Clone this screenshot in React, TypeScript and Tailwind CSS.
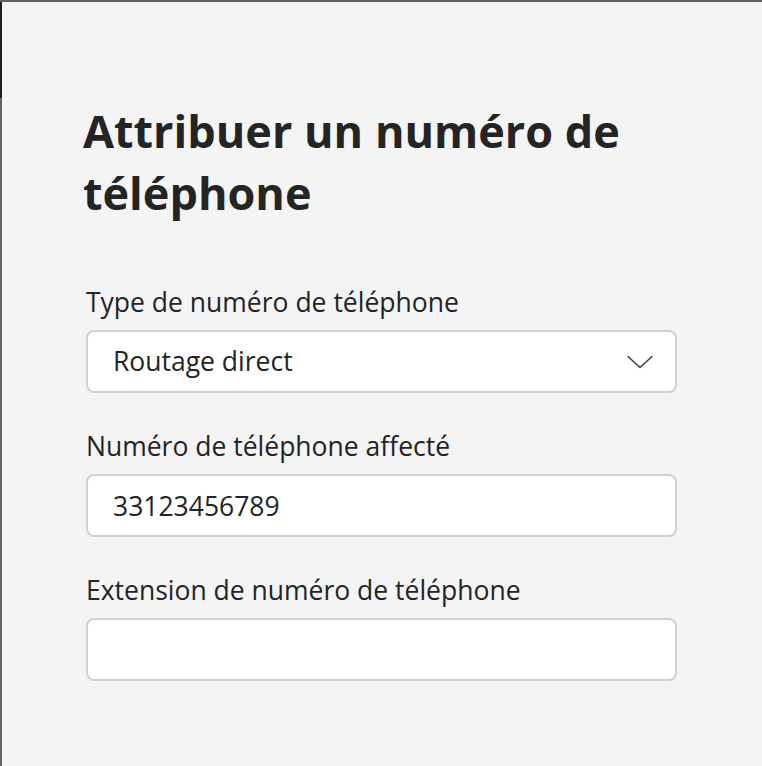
import { useState } from 'react';

const font = { fontFamily: '"Open Sans", "Noto Sans", sans-serif' };

function Field({
  label,
  children,
}: {
  label: string;
  children: React.ReactNode;
}) {
  return (
    <div className="flex flex-col">
      <label className="h-[36px] leading-[36px] text-[26.5px] text-[#242424]">{label}</label>
      <div className="mt-[10px]">{children}</div>
    </div>
  );
}

function ChevronDown() {
  return (
    <svg width="26" height="14" viewBox="0 0 26 14" fill="none">
      <path d="M1 1.5L13 12.5L25 1.5" stroke="#424242" strokeWidth="1.6" strokeLinecap="round" strokeLinejoin="round" />
    </svg>
  );
}

export default function App() {
  const [type] = useState('Routage direct');
  const [number, setNumber] = useState('33123456789');
  const [ext, setExt] = useState('');

  return (
    <div className="w-[762px] h-[766px] bg-[#f4f4f4] flex flex-col overflow-hidden" style={font}>
      <div className="h-[2px] bg-[#606060]" />
      <div className="flex flex-1">
        <div className="w-[2px] flex flex-col">
          <div className="h-[96px] bg-[#1f1f1f]" />
          <div className="flex-1 bg-[#666666]" />
        </div>
        <div className="flex-1 pl-[84px] pt-[98px]">
          <h1 className="-ml-[3px] text-[45px] leading-[62px] font-bold text-[#242424] w-[600px]">
            Attribuer un numéro de téléphone
          </h1>

          <div className="mt-[60px] flex flex-col gap-[35px] w-[591px]">
            <Field label="Type de numéro de téléphone">
              <button className="w-full h-[63px] bg-white border-2 border-[#d1d1d1] rounded-[8px] flex items-center justify-between pl-[25px] pr-[22px] text-[26.5px] text-[#242424]">
                <span>{type}</span>
                <ChevronDown />
              </button>
            </Field>

            <Field label="Numéro de téléphone affecté">
              <input
                value={number}
                onChange={(e) => setNumber(e.target.value)}
                className="w-full h-[63px] bg-white border-2 border-[#d1d1d1] rounded-[8px] pl-[25px] text-[26.5px] text-[#242424] outline-none"
              />
            </Field>

            <Field label="Extension de numéro de téléphone">
              <input
                value={ext}
                onChange={(e) => setExt(e.target.value)}
                className="w-full h-[63px] bg-white border-2 border-[#d1d1d1] rounded-[8px] pl-[25px] text-[26.5px] text-[#242424] outline-none"
              />
            </Field>
          </div>
        </div>
      </div>
    </div>
  );
}
